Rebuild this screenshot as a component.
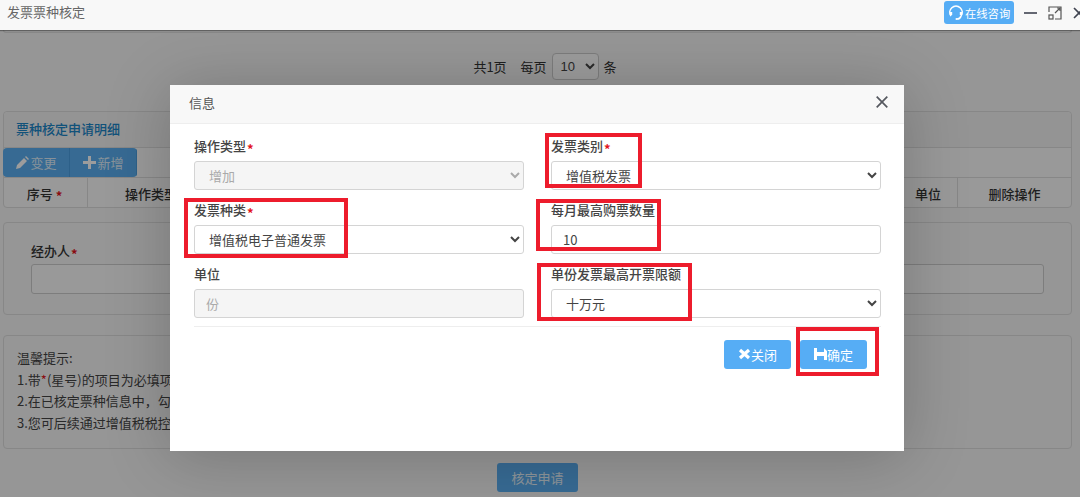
<script>
  const tips = [
    '2.在已核定票种信息中，勾选需要变更的票种信息',
    '3.您可后续通过增值税税控系统进行发票领用'
  ];
</script>

<div class="screen">
  <header class="topbar">
    <span class="topbar-title">发票票种核定</span>
    <div class="topbar-actions">
      <button class="consult">
        <svg width="16" height="17" viewBox="0 0 16 17" fill="none" stroke="#fff" stroke-width="1.6">
          <path d="M3 12 A6.2 6.2 0 1 1 13 12" />
          <path d="M3 8v3M13 8v3" stroke-width="2.4" />
          <path d="M13 12c-.5 2-2 3-4 3" />
          <circle cx="8.5" cy="15" r="1" fill="#fff" stroke="none" />
        </svg>
        在线咨询
      </button>
      <svg class="win" width="14" height="14" viewBox="0 0 14 14"><path d="M0 7h13" stroke="#3f4350" stroke-width="1.6" /></svg>
      <svg class="win" width="14" height="14" viewBox="0 0 14 14" fill="none" stroke="#555" stroke-width="1.2">
        <path d="M1 6V1h12v12H7" />
        <rect x="1" y="9" width="4" height="4" />
        <path d="M7 7l5-5M9 2h3v3" />
      </svg>
      <svg class="win" width="14" height="14" viewBox="0 0 14 14"><path d="M2 2l10 10M12 2L2 12" stroke="#3f4350" stroke-width="1.6" /></svg>
    </div>
  </header>

  <main class="page">
    <div class="scroll-edge"></div>
    <div class="pager">
      <span class="pager-total">共1页</span>
      <span>每页</span>
      <select class="pager-select"><option>10</option></select>
      <span>条</span>
    </div>

    <section class="detail">
      <h2 class="detail-title">票种核定申请明细</h2>
      <div class="btn-group">
        <span class="group-btn">
          <svg width="13" height="13" viewBox="0 0 13 13" fill="#fff"><path d="M0 13l1-4 7-7 3 3-7 7zM9 1l1-1 3 3-1 1z" /></svg>变更
        </span>
        <span class="group-btn">
          <svg width="13" height="13" viewBox="0 0 13 13" fill="#fff"><path d="M5 0h3v5h5v3H8v5H5V8H0V5h5z" /></svg>新增
        </span>
      </div>
      <div class="table-head">
        <div class="th seq">序号<i>*</i></div>
        <div class="th type">操作类型</div>
        <div class="th fill"></div>
        <div class="th unit">单位</div>
        <div class="th del">删除操作</div>
      </div>
    </section>

    <section class="agent">
      <div class="agent-label">经办人 <i>*</i></div>
      <div class="agent-input"></div>
    </section>

    <section class="tips">
      <p>温馨提示:</p>
      <p>1.带<span class="tip-star">*</span>(星号)的项目为必填项</p>
      <p>{tips[0]}</p>
      <p>{tips[1]}</p>
    </section>

    <div class="submit-row"><span class="submit">核定申请</span></div>
  </main>

  <div class="backdrop"></div>

  <div class="modal">
    <div class="modal-head">
      <span>信息</span>
      <svg width="12" height="12" viewBox="0 0 12 12"><path d="M.7.7l10.600 10.600M11.300.7L.7 11.300" stroke="#55585f" stroke-width="1.7" /></svg>
    </div>
    <div class="modal-body">
      <div class="field">
        <label for="f1">操作类型 <i>*</i></label>
        <select id="f1" disabled><option>增加</option></select>
      </div>
      <div class="field">
        <label for="f2">发票类别 <i>*</i></label>
        <select id="f2"><option>增值税发票</option></select>
      </div>
      <div class="field">
        <label for="f3">发票种类 <i>*</i></label>
        <select id="f3"><option>增值税电子普通发票</option></select>
      </div>
      <div class="field">
        <label for="f4">每月最高购票数量</label>
        <input id="f4" value="10" />
      </div>
      <div class="field">
        <label for="f5">单位</label>
        <input id="f5" value="份" disabled />
      </div>
      <div class="field">
        <label for="f6">单份发票最高开票限额</label>
        <select id="f6"><option>十万元</option></select>
      </div>
    </div>
    <div class="modal-foot">
      <button class="primary">
        <svg width="13" height="12" viewBox="0 0 13 12"><path d="M2 2l9 8M11 2l-9 8" stroke="#fff" stroke-width="3.200" /></svg>关闭
      </button>
      <button class="primary save">
        <svg width="13" height="12" viewBox="0 0 13 12" fill="#fff"><path d="M0 0h3v4h7V0l3 3v9h-3V8H3v4H0z" /></svg>确定
      </button>
    </div>
  </div>

  <div class="mark m1"></div>
  <div class="mark m2"></div>
  <div class="mark m3"></div>
  <div class="mark m4"></div>
  <div class="mark m5"></div>
</div>

<style>
  :global(body) {
    margin: 0;
    background: #f5f5f5;
  }
  .screen {
    position: relative;
    width: 1080px;
    height: 497px;
    overflow: hidden;
    font-family: "Noto Sans CJK SC", "Liberation Sans", sans-serif;
    font-size: 13px;
    color: #333;
    background: #f5f5f5;
  }
  i {
    font-style: normal;
    color: #e2141c;
    font-weight: 700;
    margin-left: -2px;
    vertical-align: -3px;
  }
  .tip-star {
    color: #e2141c;
  }
  .topbar {
    position: relative;
    z-index: 3;
    height: 30px;
    padding: 0 0 0 7px;
    display: flex;
    align-items: center;
    justify-content: space-between;
    background: #f8f8f8;
    box-shadow: 0 1px 1px rgba(0, 0, 0, .35);
    color: #666;
  }
  .topbar-title {
    margin-top: -7px;
  }
  .topbar-actions {
    display: flex;
    align-items: center;
    gap: 10px;
    margin-right: -6px;
    margin-top: -5px;
  }
  .consult {
    display: flex;
    align-items: center;
    gap: 1px;
    height: 23px;
    width: 70px;
    padding: 0 0 0 4px;
    border: 0;
    border-radius: 3px;
    background: #56adf5;
    color: #fff;
    font: 11.3px "Noto Sans CJK SC", sans-serif;
    white-space: nowrap;
  }
  .win {
    flex: none;
  }
  .page {
    padding: 0 8px 0 3px;
  }
  .scroll-edge {
    height: 3px;
    box-sizing: border-box;
    border: 1px solid #ddd;
    border-top: 0;
    border-radius: 0 0 3px 3px;
  }
  .pager {
    display: flex;
    justify-content: center;
    align-items: center;
    gap: 5px;
    height: 28px;
    margin: 19px 0 31px;
    padding-left: 15px;
  }
  .pager-total {
    margin-right: 9px;
  }
  .pager-select {
    width: 47px;
    height: 27px;
    padding: 0 0 0 4px;
    border: 1px solid #ccc;
    border-radius: 4px;
    background: #fff;
    font-size: 13px;
    font-family: "Liberation Sans", sans-serif;
  }
  .detail {
    border-radius: 4px;
    border: 1px solid #ddd;
    height: 95px;
    box-sizing: content-box;
    background: #fafafa;
  }
  .detail-title {
    margin: 0;
    height: 36px;
    line-height: 33px;
    padding-left: 12px;
    font-size: 13px;
    font-weight: 500;
    color: #1c86c8;
    background: #f2f2f2;
    border-bottom: 1px solid #ddd;
    border-radius: 4px 4px 0 0;
    box-sizing: border-box;
  }
  .btn-group {
    display: flex;
    width: 134px;
    height: 29px;
    margin-left: -1px;
    border-radius: 4px;
    overflow: hidden;
  }
  .group-btn {
    flex: 1;
    display: flex;
    align-items: center;
    justify-content: center;
    gap: 1px;
    background: #5aaef0;
    color: #dfeefb;
    box-shadow: inset -1px 0 0 #4a9ee0;
  }
  .table-head {
    display: flex;
    height: 30px;
    border-top: 1px solid #ddd;
    font-weight: 500;
  }
  .th {
    display: flex;
    align-items: center;
    justify-content: center;
    border-right: 1px solid #ddd;
    gap: 3px;
  }
  .th i {
    margin-left: 0;
    vertical-align: baseline;
    margin-top: 4px;
  }
  .seq { width: 84px; padding-right: 2px; box-sizing: border-box; }
  .type { width: 126px; }
  .fill { flex: 1; }
  .unit { width: 58px; }
  .del { width: 113px; border-right: 0; }
  .agent {
    margin-top: 14px;
    height: 93px;
    box-sizing: border-box;
    padding: 18px 27px 0;
    border: 1px solid #ddd;
    border-radius: 4px;
  }
  .agent-label {
    font-weight: 500;
    margin-bottom: 4px;
    height: 19px;
    line-height: 19px;
  }
  .agent-input {
    height: 28px;
    background: #fafafa;
    border: 1px solid #ccc;
    border-radius: 3px;
  }
  .tips {
    margin-top: 20px;
    height: 114px;
    box-sizing: border-box;
    padding: 11px 13px 0;
    border: 1px solid #ddd;
    border-radius: 4px;
    color: #444;
  }
  .tips p {
    margin: 0;
    line-height: 21.700px;
    white-space: nowrap;
  }
  .submit-row {
    margin-top: 14px;
    display: flex;
    justify-content: center;
  }
  .submit {
    width: 81px;
    height: 29px;
    line-height: 29px;
    text-align: center;
    border-radius: 3px;
    background: #5aaef0;
    color: #e8f3fc;
  }
  .backdrop {
    position: absolute;
    inset: 0;
    z-index: 1;
    background: rgba(0, 0, 0, .39);
  }
  .modal {
    position: absolute;
    z-index: 2;
    left: 170px;
    top: 85px;
    width: 734px;
    height: 366px;
    background: #fff;
    box-shadow: 0 5px 60px rgba(0, 0, 0, .22);
  }
  .modal-head {
    height: 39px;
    box-sizing: border-box;
    padding: 0 16px 4px 19px;
    display: flex;
    align-items: center;
    justify-content: space-between;
    background: #f8f8f8;
    border-bottom: 1px solid #eee;
    color: #555;
  }
  .modal-body {
    display: grid;
    grid-template-columns: 330px 330px;
    column-gap: 27px;
    grid-auto-rows: 64px;
    margin: 0 23px 0 24px;
    padding: 12px 0 0;
    height: 190px;
    border-bottom: 1px solid #eee;
  }
  .field {
    display: flex;
    flex-direction: column;
  }
  label {
    height: 25px;
    line-height: 20px;
    font-weight: 500;
    color: #444;
  }
  select, input {
    box-sizing: border-box;
    width: 100%;
    height: 29px;
    border: 1px solid #d4d4d4;
    border-radius: 3px;
    background: #fff;
    color: #444;
    font: 13px "Noto Sans CJK SC", sans-serif;
    outline: none;
  }
  .field select {
    padding: 0 0 0 10px;
  }
  input {
    padding: 0 11px;
  }
  select:disabled, input:disabled {
    background: #f5f5f5;
    color: #aaa;
    opacity: 1;
  }
  .modal-foot {
    display: flex;
    justify-content: flex-end;
    gap: 9px;
    padding: 13px 37px 0 0;
  }
  .primary {
    display: flex;
    align-items: center;
    justify-content: center;
    gap: 0;
    width: 67px;
    height: 29px;
    padding: 0;
    border: 0;
    border-radius: 3px;
    background: #56adf5;
    color: #fff;
    font: 13px "Noto Sans CJK SC", sans-serif;
  }
  .primary svg {
    margin-top: -2px;
  }
  .mark {
    position: absolute;
    z-index: 4;
    box-sizing: border-box;
    border: 4px solid #ed1c2c;
    pointer-events: none;
  }
  .m1 { left: 545px; top: 133px; width: 97px; height: 55px; }
  .m2 { left: 184px; top: 198px; width: 164px; height: 60px; }
  .m3 { left: 536px; top: 199px; width: 125px; height: 52px; }
  .m4 { left: 537px; top: 263px; width: 155px; height: 58px; }
  .m5 { left: 796px; top: 327px; width: 83px; height: 49px; }
</style>
